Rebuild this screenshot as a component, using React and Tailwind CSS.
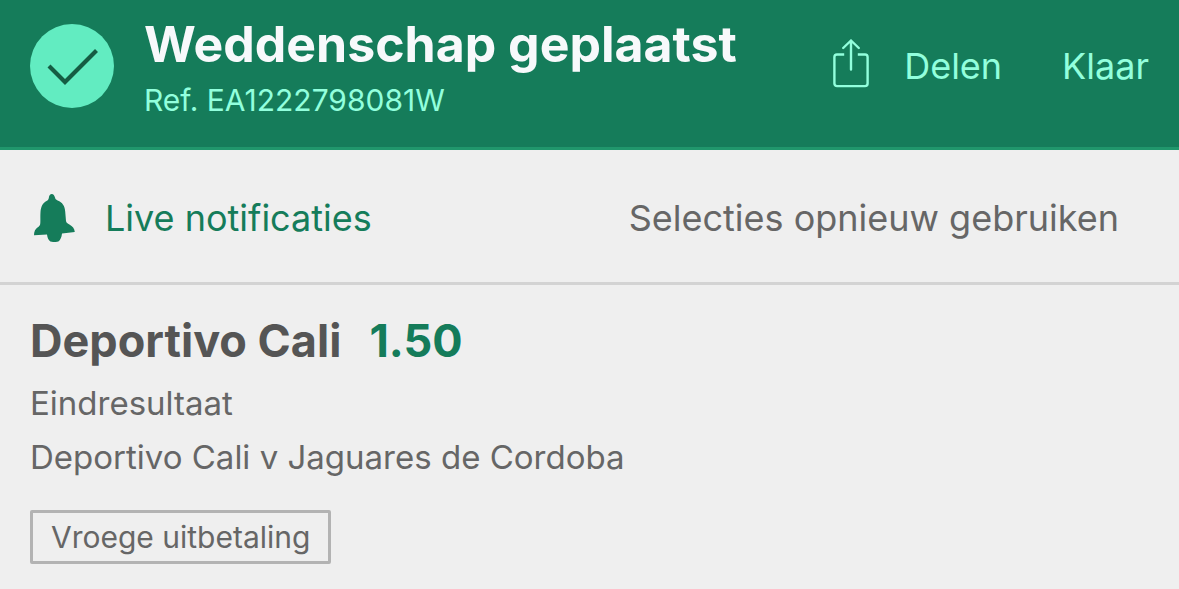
function CheckBadge() {
  return (
    <svg viewBox="0 0 84 84" className="size-21 shrink-0" fill="none" aria-hidden="true">
      <circle cx="42" cy="42" r="42" fill="#62ecc1" />
      <path d="M19 42.500 35 58.500 66.500 27" transform="translate(0 -.5)" stroke="#155c43" strokeWidth="4.2" />
    </svg>
  );
}

function ShareIcon() {
  return (
    <svg
      viewBox="0 0 36 50"
      className="mb-1.5 h-[50px] w-9 shrink-0"
      fill="none"
      stroke="currentColor"
      strokeWidth="2.4"
      strokeLinecap="round"
      strokeLinejoin="round"
      aria-hidden="true"
    >
      <path strokeLinecap="butt" d="M11.2 16.500H4a2.600 2.600 0 0 0-2.600 2.600v26.400A2.600 2.600 0 0 0 4 48.100h28a2.600 2.600 0 0 0 2.600-2.600V19.100a2.600 2.600 0 0 0-2.600-2.600h-7.200" />
      <path d="M18 31.500V2.500M10.200 10 18 2.500l7.800 7.500" />
    </svg>
  );
}

function BellIcon() {
  return (
    <svg viewBox="0 0 41 48" className="h-12 w-[41px] shrink-0" fill="currentColor" aria-hidden="true">
      <path d="M17.8 0c1.6 0 2.7 1.6 3.2 3.6.3 1.5.9 2.2 2.6 2.8 4.800 1.800 7.300 5.600 7.600 11l.8 9.600c.4 1.700 1.500 2.600 3.400 3.600 3.200 1.700 5 4 5.400 7.400L28 39.500c-.4 3.800-1.600 6.500-3.600 8.100-2.500.6-5.400.6-8 0-2-1.400-3-3.800-3.400-7.100L0 41.300c0-3.500 1.200-6.200 3.800-8 1.700-1.200 2.400-2.200 2.500-4.300.2-3.600-.1-6.700.2-11C6.900 12.300 9 8.600 12.500 6.900c1.500-.7 2-1.500 2.300-3C15.100 1.600 16.200 0 17.800 0z" />
    </svg>
  );
}

export default function App() {
  return (
    <div className="min-h-screen bg-[#efefef] font-['Inter',sans-serif] text-[#666]">
      <header className="flex items-start gap-[30px] border-b-3 border-[#20976c] bg-[#157c5a] px-[30px] pt-3 pb-[23px] text-[#92ffdd]">
        <div className="mt-3">
          <CheckBadge />
        </div>
        <div className="min-w-0 flex-1">
          <h1 className="text-[50px] leading-16 font-bold whitespace-nowrap text-[#f7f9fb]">
            Weddenschap geplaatst
          </h1>
          <p className="text-[30px] leading-12">Ref. EA1222798081W</p>
        </div>
        <div className="mt-3 flex h-21 items-center gap-15 text-[36px]">
          <button type="button" className="flex items-center gap-[35px]">
            <ShareIcon />
            Delen
          </button>
          <button type="button">Klaar</button>
        </div>
      </header>

      <div className="flex items-center justify-between border-b-3 border-[#d3d3d3] pt-11 pr-15 pb-10 pl-[34px] text-[36px] leading-12">
        <button type="button" className="flex items-center gap-[30px] text-[#157c5a]">
          <BellIcon />
          Live notificaties
        </button>
        <button type="button">Selecties opnieuw gebruiken</button>
      </div>

      <main className="px-[30px] pt-6">
        <h2 className="mb-[3px] flex gap-7 text-[45px] leading-16 font-bold text-[#555]">
          Deportivo Cali
          <span className="text-[#157c5a]">1.50</span>
        </h2>
        <p className="text-[33px] leading-[54px]">Eindresultaat</p>
        <p className="text-[33px] leading-[54px]">Deportivo Cali v Jaguares de Cordoba</p>
        <span className="mt-[26px] inline-block rounded-xs border-3 border-[#b3b3b3] px-[18px] text-[30px] leading-12">
          Vroege uitbetaling
        </span>
      </main>
    </div>
  );
}
